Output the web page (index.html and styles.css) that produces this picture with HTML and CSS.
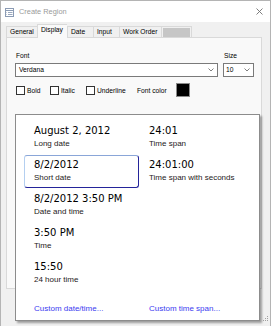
FILE: index.html
```html
<!DOCTYPE html>
<html lang="en">
<head>
    <meta charset="UTF-8">
    <meta name="viewport" content="width=device-width, initial-scale=1.0">
    <title>Create Region</title>
    <link rel="stylesheet" href="styles.css">
</head>
<body>
    <div class="window">
        <div class="titlebar">
            <svg class="app-icon" width="9" height="9" viewBox="0 0 9 9">
                <rect x="0.5" y="0.5" width="8" height="8" fill="#fff" stroke="#8b9bb4"/>
                <line x1="0.5" y1="2.5" x2="8.5" y2="2.5" stroke="#8b9bb4"/>
                <line x1="3" y1="4.5" x2="7.5" y2="4.5" stroke="#9aa8be"/>
                <line x1="3" y1="6.5" x2="7.5" y2="6.5" stroke="#9aa8be"/>
                <line x1="1.5" y1="4.5" x2="2" y2="4.5" stroke="#9aa8be"/>
                <line x1="1.5" y1="6.5" x2="2" y2="6.5" stroke="#9aa8be"/>
            </svg>
            <span class="title">Create Region</span>
            <svg class="close" width="7" height="7" viewBox="0 0 7 7">
                <path d="M0.5 0.5 L6.5 6.5 M6.5 0.5 L0.5 6.5" stroke="#707070" stroke-width="0.9"/>
            </svg>
        </div>

        <div class="tabs">
            <div class="tab tab-general">General</div>
            <div class="tab tab-display active">Display</div>
            <div class="tab tab-date">Date</div>
            <div class="tab tab-input">Input</div>
            <div class="tab tab-order">Work Order</div>
            <div class="tab tab-blank"><span class="blank-fill"></span></div>
        </div>

        <div class="panel">
            <div class="label-row">
                <span class="lbl-font">Font</span>
                <span class="lbl-size">Size</span>
            </div>
            <div class="combo-row">
                <div class="combo combo-font">
                    <span>Verdana</span>
                    <svg class="chevron" width="6" height="4" viewBox="0 0 6 4"><path d="M0.5 0.5 L3 3 L5.5 0.5" fill="none" stroke="#606060" stroke-width="0.8"/></svg>
                </div>
                <div class="combo combo-size">
                    <span>10</span>
                    <svg class="chevron" width="6" height="4" viewBox="0 0 6 4"><path d="M0.5 0.5 L3 3 L5.5 0.5" fill="none" stroke="#606060" stroke-width="0.8"/></svg>
                </div>
            </div>
            <div class="style-row">
                <label class="check check-bold"><span class="box"></span>Bold</label>
                <label class="check check-italic"><span class="box"></span>Italic</label>
                <label class="check check-underline"><span class="box"></span>Underline</label>
                <span class="color-label">Font color</span>
                <span class="swatch"></span>
            </div>
        </div>
    </div>

    <div class="format-popup">
        <div class="format-grid">
            <div class="fmt">
                <div class="fmt-value">August 2, 2012</div>
                <div class="fmt-name">Long date</div>
            </div>
            <div class="fmt">
                <div class="fmt-value">24:01</div>
                <div class="fmt-name">Time span</div>
            </div>
            <div class="fmt selected">
                <div class="fmt-value">8/2/2012</div>
                <div class="fmt-name">Short date</div>
            </div>
            <div class="fmt">
                <div class="fmt-value">24:01:00</div>
                <div class="fmt-name">Time span with seconds</div>
            </div>
            <div class="fmt">
                <div class="fmt-value">8/2/2012 3:50 PM</div>
                <div class="fmt-name">Date and time</div>
            </div>
            <div></div>
            <div class="fmt">
                <div class="fmt-value">3:50 PM</div>
                <div class="fmt-name">Time</div>
            </div>
            <div></div>
            <div class="fmt">
                <div class="fmt-value">15:50</div>
                <div class="fmt-name">24 hour time</div>
            </div>
            <div></div>
        </div>
        <div class="links">
            <a href="#">Custom date/time...</a>
            <a href="#">Custom time span...</a>
        </div>
    </div>

    <svg class="grip" width="6" height="6" viewBox="0 0 6 6">
        <rect x="4" y="0" width="1" height="1" fill="#a0a0a0"/>
        <rect x="2" y="2" width="1" height="1" fill="#a0a0a0"/>
        <rect x="4" y="2" width="1" height="1" fill="#a0a0a0"/>
        <rect x="0" y="4" width="1" height="1" fill="#a0a0a0"/>
        <rect x="2" y="4" width="1" height="1" fill="#a0a0a0"/>
        <rect x="4" y="4" width="1" height="1" fill="#a0a0a0"/>
    </svg>
</body>
</html>
```

FILE: styles.css
```css
body {
    margin: 0;
    width: 271px;
    height: 326px;
    overflow: hidden;
    position: relative;
    background: #f0f0f0;
    font-family: "Liberation Sans", Arial, sans-serif;
    font-size: 6.7px;
    color: #000;
}
.window {
    box-sizing: border-box;
    height: 326px;
    border: 1px solid #b4b4b4;
    border-bottom: none;
}
.titlebar {
    height: 21px;
    background: #fff;
    display: flex;
    align-items: center;
}
.app-icon {
    margin-left: 4px;
    margin-top: 1px;
}
.title {
    margin-left: 5px;
    font-size: 7.4px;
    color: #9a9a9a;
}
.close {
    margin-left: auto;
    margin-right: 7px;
}

/* tabs */
.tabs {
    display: flex;
    align-items: flex-end;
    height: 13px;
    margin-top: 2px;
    margin-left: 5px;
}
.tab {
    box-sizing: border-box;
    height: 11px;
    line-height: 10px;
    padding-left: 3px;
    border: 1px solid #d9d9d9;
    border-right: none;
    border-bottom: none;
    background: #f0f0f0;
    white-space: nowrap;
}
.tab-general { width: 31px; }
.tab-display { width: 30px; }
.tab-date { width: 26px; }
.tab-input { width: 26px; }
.tab-order { width: 42px; }
.tab-blank {
    width: 31px;
    border-right: 1px solid #d9d9d9;
    padding: 1px 1px 0 1px;
}
.blank-fill {
    display: block;
    height: 9px;
    background: #c6c6c6;
}
.tab.active {
    position: relative;
    z-index: 1;
    height: 14px;
    margin-bottom: -1px;
    line-height: 9px;
    background: #f9f9f9;
}

/* tab page */
.panel {
    box-sizing: border-box;
    width: 256px;
    height: 252px;
    margin-left: 5px;
    border: 1px solid #d9d9d9;
    background: #f9f9f9;
    padding: 14px 0 0 8px;
}
.label-row {
    display: flex;
    line-height: 8px;
}
.lbl-font {
    padding-left: 1px;
    width: 208px;
}
.combo-row {
    display: flex;
    gap: 5px;
    margin-top: 3px;
}
.combo {
    box-sizing: border-box;
    height: 14px;
    line-height: 12px;
    border: 1px solid #7a7a7a;
    background: #fff;
    padding-left: 3px;
    display: flex;
    align-items: center;
}
.combo span {
    flex: 1;
}
.combo .chevron {
    margin-right: 3px;
}
.combo-font { width: 203px; }
.combo-size { width: 31px; padding-left: 2px; }

.style-row {
    display: flex;
    align-items: center;
    height: 14px;
    margin-top: 6px;
    padding-left: 1px;
}
.check {
    display: flex;
    align-items: center;
}
.check .box {
    box-sizing: border-box;
    width: 9px;
    height: 9px;
    border: 1px solid #333;
    background: #fff;
    margin-right: 2px;
}
.check-bold { width: 34px; }
.check-italic { width: 36px; }
.check-underline { width: 51px; }
.color-label {
    width: 39px;
}
.swatch {
    box-sizing: border-box;
    width: 14px;
    height: 14px;
    background: #000;
    border: 1px solid #8a8a8a;
}

/* date format dropdown */
.format-popup {
    position: absolute;
    left: 15px;
    top: 114px;
    box-sizing: border-box;
    width: 245px;
    height: 207px;
    background: #fff;
    border: 1px solid #8c8c8c;
    box-shadow: 2px 2px 2px rgba(0, 0, 0, 0.35);
    padding: 6px 0 0 8px;
}
.format-grid {
    display: grid;
    grid-template-columns: 115px 115px;
    grid-auto-rows: 34px;
}
.fmt {
    box-sizing: border-box;
    border: 1px solid transparent;
    border-radius: 3px;
    padding: 3px 0 0 9px;
    white-space: nowrap;
}
.fmt.selected {
    height: 33px;
    border-color: #8aa6d8 #24249a #24249a #b4cff0;
}
.fmt-value {
    font-family: "DejaVu Sans", Verdana, sans-serif;
    font-size: 10px;
    line-height: 12px;
    color: #000;
}
.fmt-name {
    margin-top: 2px;
    font-size: 8px;
    line-height: 10px;
    color: #261a1a;
}
.links {
    display: grid;
    grid-template-columns: 115px 115px;
    margin-top: 13px;
    font-size: 8px;
    line-height: 10px;
}
.links a {
    padding-left: 10px;
    color: #3b3bf0;
    text-decoration: none;
}

.grip {
    position: absolute;
    right: 2px;
    bottom: 4px;
}
```
